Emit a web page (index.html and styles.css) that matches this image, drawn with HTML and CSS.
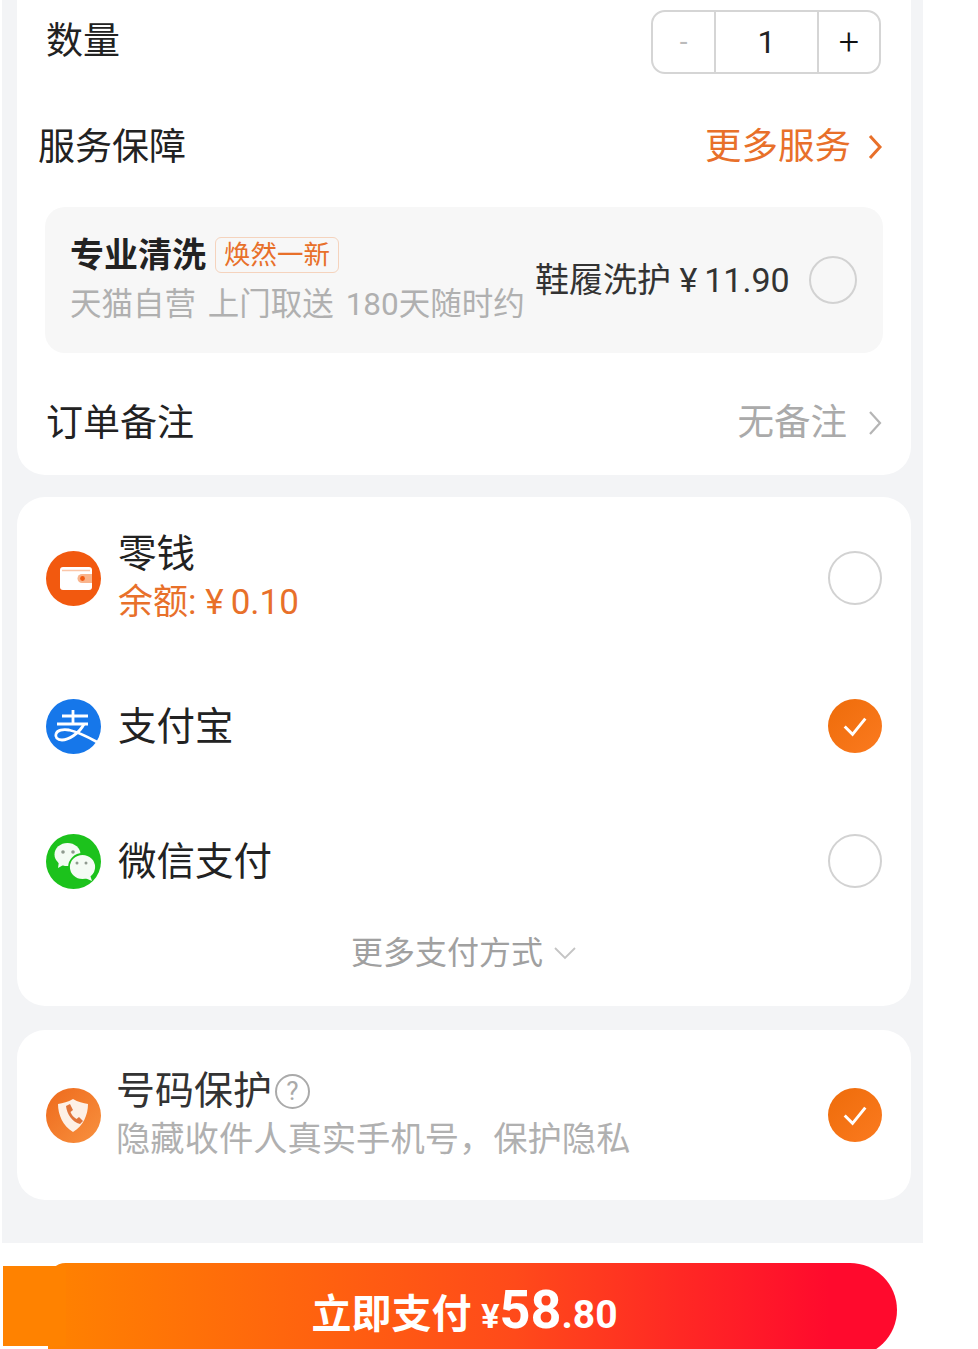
FILE: index.html
```html
<!DOCTYPE html>
<html lang="zh-CN">
<head>
    <meta charset="UTF-8">
    <meta name="viewport" content="width=device-width, initial-scale=1.0">
    <title>立即支付</title>
    <link rel="stylesheet" href="styles.css">
</head>
<body>
    <div class="panel">
        <div class="card card-order">
            <div class="row row-qty">
                <span class="label">数量</span>
                <div class="stepper">
                    <span class="step step-minus">-</span>
                    <span class="step step-value">1</span>
                    <span class="step step-plus">+</span>
                </div>
            </div>

            <div class="row row-service">
                <span class="label">服务保障</span>
                <span class="more-link">更多服务
                    <svg class="chevron" viewBox="0 0 16 28"><path d="M3 3l10 11L3 25" fill="none" stroke="#e8702a" stroke-width="3"/></svg>
                </span>
            </div>

            <div class="service-box">
                <div class="service-info">
                    <div class="service-title">专业清洗<span class="tag">焕然一新</span></div>
                    <div class="service-sub">天猫自营 上门取送 180天随时约</div>
                </div>
                <span class="service-price">鞋履洗护 ¥&#8201;11.90</span>
                <span class="radio radio-small"></span>
            </div>

            <div class="row row-note">
                <span class="label">订单备注</span>
                <span class="note-value">无备注
                    <svg class="chevron" viewBox="0 0 16 28"><path d="M3 3l10 11L3 25" fill="none" stroke="#b5b5b5" stroke-width="2.2"/></svg>
                </span>
            </div>
        </div>

        <div class="card card-pay">
            <div class="pay-row pay-wallet">
                <svg class="pay-icon" viewBox="0 0 55 55">
                    <circle cx="27.5" cy="27.5" r="27.5" fill="#f2590f"/>
                    <rect x="14" y="16" width="32" height="23" rx="3" fill="#fff"/>
                    <path d="M16 19.500h28" stroke="#fbc6a8" stroke-width="1.500"/>
                    <path d="M46 23h-10a4.500 4.500 0 0 0 0 9h10z" fill="#f9b48c"/>
                    <circle cx="36.500" cy="27.500" r="2.400" fill="#f2590f"/>
                </svg>
                <div class="pay-text">
                    <div class="pay-name">零钱</div>
                    <div class="pay-balance">余额: ¥&#8201;0.10</div>
                </div>
                <span class="radio"></span>
            </div>

            <div class="pay-row pay-alipay">
                <svg class="pay-icon" viewBox="0 0 55 55">
                    <circle cx="27.5" cy="27.5" r="27.5" fill="#1677ea"/>
                    <g fill="none" stroke="#fff" stroke-width="2.800">
                        <path d="M16 17h26M27 11v14M11 25h31"/>
                        <path d="M38 25C33 35 22 41 16 41c-5 0-7-3-6-6 1-4 7-5 13-4 9 2 19 7 28 12"/>
                    </g>
                </svg>
                <div class="pay-name">支付宝</div>
                <span class="radio radio-on">
                    <svg viewBox="0 0 55 55"><path d="M17 28l8 8 13-16" fill="none" stroke="#fff" stroke-width="3"/></svg>
                </span>
            </div>

            <div class="pay-row pay-wechat">
                <svg class="pay-icon" viewBox="0 0 55 55">
                    <circle cx="27.5" cy="27.5" r="27.5" fill="#1cc21c"/>
                    <ellipse cx="21.500" cy="20.500" rx="13" ry="11.500" fill="#f4fbf4"/>
                    <path d="M13 27l-1 7 7-4z" fill="#f4fbf4"/>
                    <ellipse cx="36.500" cy="33" rx="13.500" ry="13" fill="#f4fbf4" stroke="#1cc21c" stroke-width="1.800"/>
                    <path d="M44 41l2 6-7-3z" fill="#f4fbf4"/>
                    <g fill="#8f9a8f">
                        <circle cx="17" cy="18" r="1.800"/><circle cx="27" cy="18" r="1.800"/>
                        <circle cx="31" cy="29" r="1.500"/><circle cx="40" cy="29" r="1.500"/>
                    </g>
                </svg>
                <div class="pay-name">微信支付</div>
                <span class="radio"></span>
            </div>

            <div class="pay-more">更多支付方式
                <svg class="chevron-down" viewBox="0 0 24 14"><path d="M2 2l10 10L22 2" fill="none" stroke="#c4c4c4" stroke-width="1.8"/></svg>
            </div>
        </div>

        <div class="card card-protect">
            <svg class="pay-icon" viewBox="0 0 55 55">
                <defs>
                    <linearGradient id="orange-a" x1="0" y1="0" x2="1" y2="1">
                        <stop offset="0" stop-color="#ee6a1c"/>
                        <stop offset="1" stop-color="#f8913f"/>
                    </linearGradient>
                </defs>
                <circle cx="27.5" cy="27.5" r="27.5" fill="url(#orange-a)"/>
                <path d="M27 11c5 3 10 4 15 5 0 11-5 22-15 28-10-6-15-17-15-28 5-1 10-2 15-5z" fill="#fdf0e6"/>
                <path d="M20 18l4-2 3 6-2.500 2c1 3 3 5 6 7l2.500-2 4 4-3 3c-8-2-13-10-14-18z" fill="#e0743a"/>
            </svg>
            <div class="protect-text">
                <div class="protect-title">号码保护<span class="help">?</span></div>
                <div class="protect-sub">隐藏收件人真实手机号，保护隐私</div>
            </div>
            <span class="radio radio-on">
                <svg viewBox="0 0 55 55"><path d="M17 28l8 8 13-16" fill="none" stroke="#fff" stroke-width="3"/></svg>
            </span>
        </div>
    </div>

    <button class="pay-btn">立即支付 <span class="currency">¥</span><span class="amount">58</span><span class="cents">.80</span></button>
</body>
</html>
```

FILE: styles.css
```css
html, body {
    height: 1349px;
    overflow: hidden;
}
body {
    margin: 0;
    padding: 0;
    background-color: #fff;
    color: #222;
    font-family: Roboto, "Noto Sans CJK SC", sans-serif;
    line-height: 1;
}
.panel {
    box-sizing: border-box;
    width: 921px;
    height: 1243px;
    margin-left: 2px;
    padding: 0 12px 0 15px;
    background-color: #f3f4f6;
}
.card {
    background-color: #fff;
    border-radius: 28px;
}
.card-order {
    margin-bottom: 22px;
    padding: 0 28px 16px 29px;
    border-radius: 0 0 28px 28px;
}
.row {
    display: flex;
    justify-content: space-between;
    align-items: center;
    height: 72px;
    font-size: 37px;
}
.row-qty {
    height: 82px;
    padding-right: 2px;
}
.row-service {
    margin-top: 28px;
    margin-left: -8px;
    padding-top: 2px;
    height: 70px;
}
.row-note {
    margin-top: 34px;
}
.stepper {
    display: flex;
    box-sizing: border-box;
    width: 230px;
    height: 64px;
    margin-top: 2px;
    border: 2px solid #d5d5d5;
    border-radius: 14px;
}
.step {
    display: flex;
    justify-content: center;
    align-items: center;
    font-size: 32px;
}
.step-minus {
    width: 61px;
    color: #bbb;
    font-size: 28px;
}
.step-value {
    flex: 1;
    border-left: 2px solid #d5d5d5;
    border-right: 2px solid #d5d5d5;
}
.step-plus {
    width: 60px;
    font-size: 36px;
    font-weight: 300;
    color: #111;
}
.more-link, .note-value {
    display: flex;
    align-items: center;
    font-size: 36.5px;
}
.more-link {
    gap: 16px;
    color: #e8702a;
}
.note-value {
    gap: 20px;
    color: #aaa;
}
.chevron {
    width: 16px;
    height: 28px;
}
.service-box {
    display: flex;
    align-items: center;
    box-sizing: border-box;
    height: 146px;
    margin-top: 25px;
    margin-left: -1px;
    padding: 0 26px 0 25px;
    background-color: #f7f7f7;
    border-radius: 20px;
}
.service-info {
    width: 465px;
    flex-shrink: 0;
}
.service-title {
    display: flex;
    align-items: center;
    height: 40px;
    font-size: 34px;
    font-weight: 700;
}
.tag {
    margin-left: 9px;
    padding: 3px 8px;
    border: 1px solid #f5d3bd;
    border-radius: 6px;
    color: #e8702a;
    font-size: 26.500px;
    font-weight: 400;
    line-height: 28px;
}
.service-sub {
    margin-top: 10px;
    color: #b0b0b0;
    font-size: 31.500px;
    line-height: 40px;
    white-space: nowrap;
    word-spacing: 4px;
}
.service-price {
    flex: 1;
    color: #333;
    font-size: 34px;
    white-space: nowrap;
}
.radio {
    flex-shrink: 0;
    box-sizing: border-box;
    width: 54px;
    height: 54px;
    border: 2px solid #d2d2d2;
    border-radius: 50%;
}
.radio-small {
    width: 48px;
    height: 48px;
}
.radio-on {
    border: none;
    background: linear-gradient(135deg, #ee6c0a, #fb7a1f);
}
.radio-on svg {
    display: block;
}
.card-pay {
    box-sizing: border-box;
    height: 509px;
    margin-bottom: 24px;
    padding: 36px 29px 0;
}
.pay-row {
    display: flex;
    align-items: center;
    height: 90px;
}
.pay-alipay {
    margin-top: 58px;
}
.pay-wechat {
    margin-top: 45px;
}
.pay-icon {
    flex-shrink: 0;
    width: 55px;
    height: 55px;
    margin-right: 17px;
}
.pay-text {
    flex: 1;
}
.pay-name {
    flex: 1;
    font-size: 38.500px;
    line-height: 49px;
}
.pay-balance {
    color: #e8702a;
    font-size: 35px;
    line-height: 49px;
}
.pay-more {
    display: flex;
    justify-content: center;
    align-items: center;
    gap: 10px;
    height: 40px;
    margin-top: 27px;
    color: #a0a0a0;
    font-size: 32px;
}
.chevron-down {
    width: 24px;
    height: 14px;
}
.card-protect {
    display: flex;
    align-items: center;
    box-sizing: border-box;
    height: 170px;
    padding: 0 29px;
}
.card-protect .pay-icon {
    margin-right: 15px;
}
.protect-text {
    flex: 1;
}
.protect-title {
    display: flex;
    align-items: center;
    color: #333;
    font-size: 39px;
    line-height: 48px;
}
.help {
    display: flex;
    justify-content: center;
    align-items: center;
    box-sizing: border-box;
    width: 35px;
    height: 35px;
    margin-left: 3px;
    border: 2px solid #aaa;
    border-radius: 50%;
    color: #aaa;
    font-size: 26px;
}
.protect-sub {
    color: #b0b0b0;
    font-size: 34.300px;
    line-height: 48px;
    white-space: nowrap;
}
.pay-btn {
    position: relative;
    display: block;
    width: 849px;
    height: 94px;
    margin: 20px 0 0 48px;
    padding: 0 16px 0 0;
    border: none;
    border-radius: 18px 48px 48px 0;
    background: linear-gradient(90deg, #ff8200, #ff4a1a 55%, #ff0a2d 92%);
    color: #fff;
    font-family: inherit;
    font-size: 40px;
    font-weight: 700;
    line-height: 94px;
    text-align: center;
    white-space: nowrap;
}
.pay-btn::before {
    content: "";
    position: absolute;
    left: -45px;
    top: 3px;
    width: 63px;
    height: 80px;
    background-color: #ff8200;
}
.currency {
    font-size: 34px;
}
.amount {
    font-size: 54px;
}
.cents {
    font-size: 39px;
}
```
